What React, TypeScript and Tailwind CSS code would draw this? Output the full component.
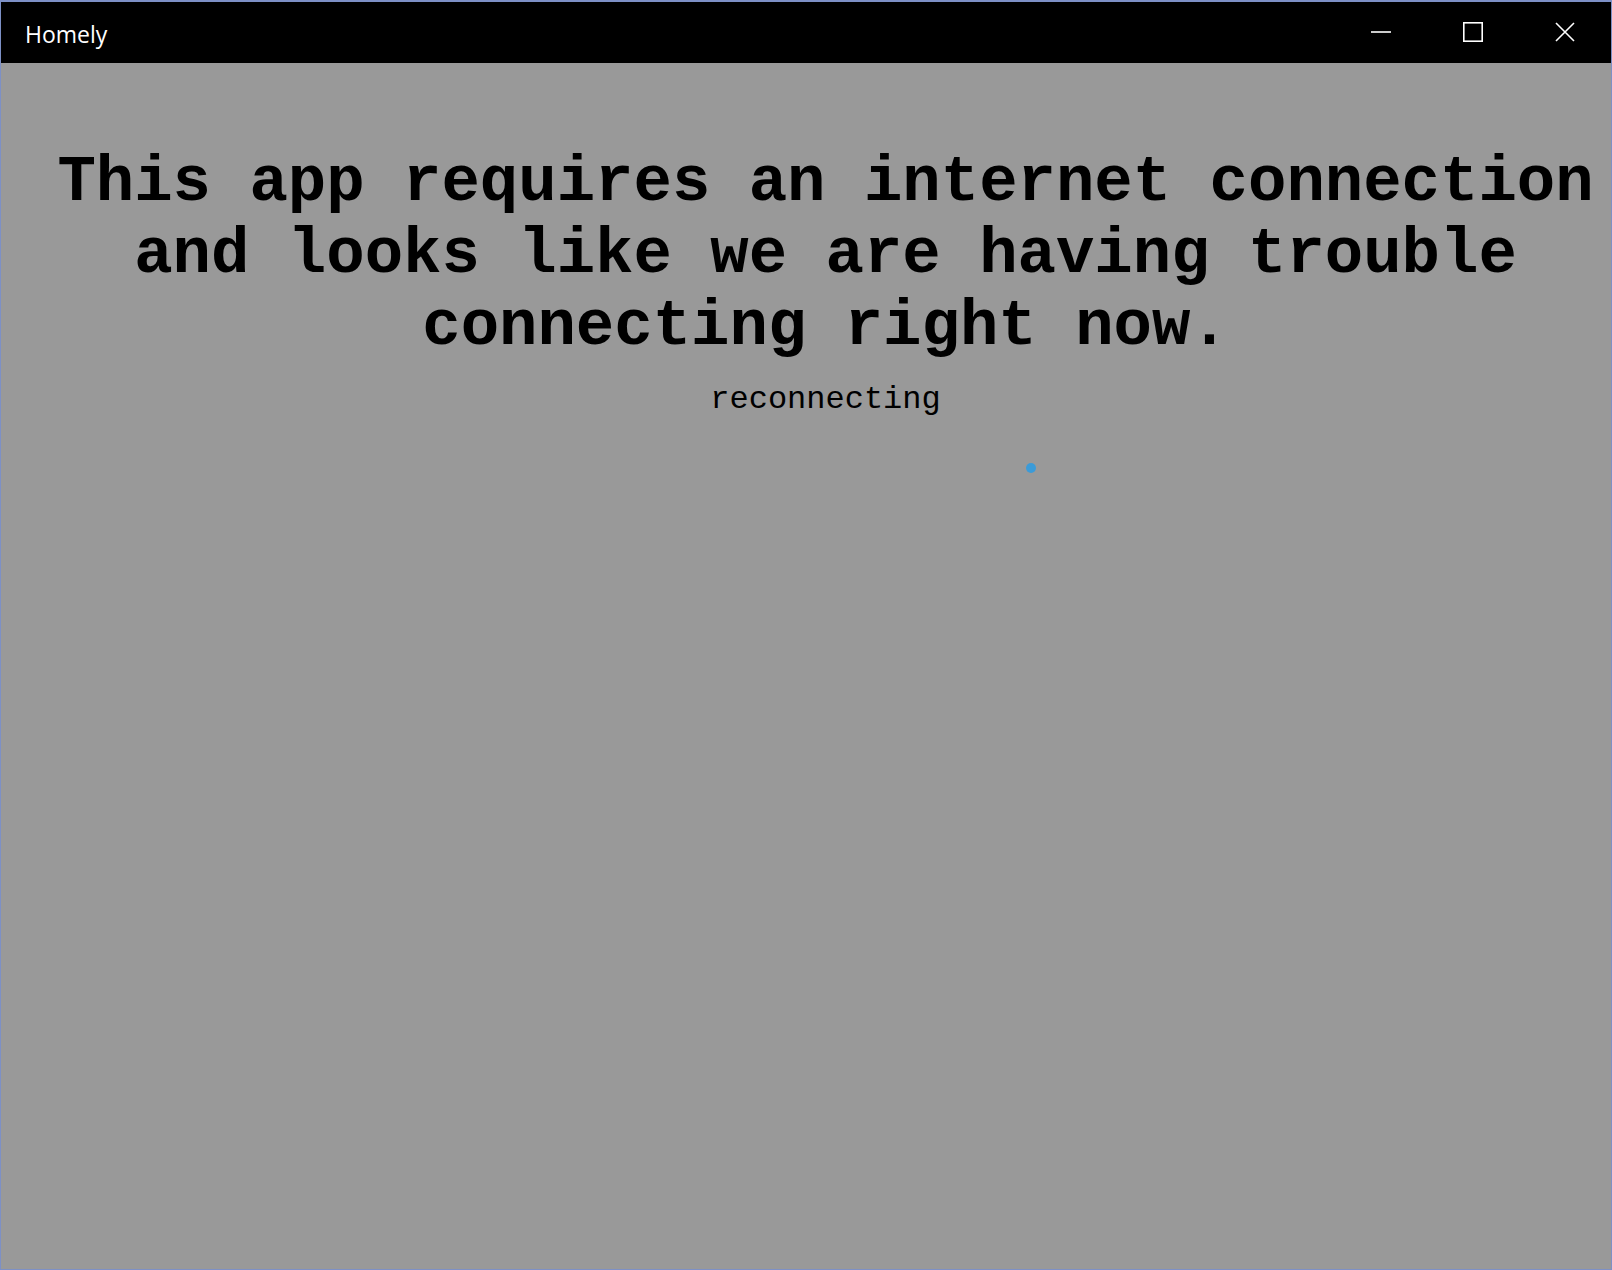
import React from 'react';

export default function App() {
  return (
    <div className="h-screen w-full flex flex-col border border-t-2 border-[#7d90c6] bg-[#999999] overflow-hidden">
      {/* Title bar */}
      <div className="h-[61px] shrink-0 bg-black flex items-center justify-between">
        <span className="pl-[24px] pt-[3px] text-white text-[23px]" style={{ fontFamily: '"Open Sans", "Noto Sans", sans-serif' }}>
          Homely
        </span>
        <div className="flex h-full">
          <button className="w-[92px] h-full flex items-center justify-center pb-[2px]">
            <svg width="20" height="20" viewBox="0 0 20 20">
              <line x1="0" y1="10" x2="20" y2="10" stroke="white" strokeWidth="1.6" />
            </svg>
          </button>
          <button className="w-[92px] h-full flex items-center justify-center pb-[2px]">
            <svg width="20" height="20" viewBox="0 0 20 20">
              <rect x="0.8" y="0.8" width="18.4" height="18.4" fill="none" stroke="white" strokeWidth="1.6" />
            </svg>
          </button>
          <button className="w-[92px] h-full flex items-center justify-center pb-[2px]">
            <svg width="20" height="20" viewBox="0 0 20 20">
              <path d="M1 1 L19 19 M19 1 L1 19" stroke="white" strokeWidth="1.6" />
            </svg>
          </button>
        </div>
      </div>

      {/* Content */}
      <div className="flex-1 flex flex-col items-center pl-[39px] pt-[84px]" style={{ fontFamily: '"Liberation Mono", "Courier New", monospace' }}>
        <h1 className="text-center text-black font-bold text-[64px] leading-[72px]">
          This app requires an internet connection and looks like we are having trouble connecting right now.
        </h1>
        <p className="mt-[19px] text-center text-black text-[32px] leading-[36px]">reconnecting</p>
        <div className="relative w-full h-[80px]">
          <span className="absolute left-[986px] top-[45px] w-[10px] h-[10px] rounded-full bg-[#3b9bd8]" />
        </div>
      </div>
    </div>
  );
}
